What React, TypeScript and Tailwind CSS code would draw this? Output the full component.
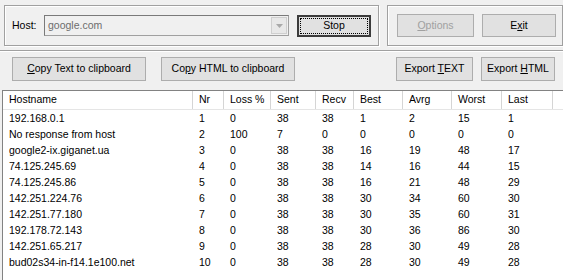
import React from 'react';

type Row = [string, string, string, string, string, string, string, string, string];

const rows: Row[] = [
  ['192.168.0.1', '1', '0', '38', '38', '1', '2', '15', '1'],
  ['No response from host', '2', '100', '7', '0', '0', '0', '0', '0'],
  ['google2-ix.giganet.ua', '3', '0', '38', '38', '16', '19', '48', '17'],
  ['74.125.245.69', '4', '0', '38', '38', '14', '16', '44', '15'],
  ['74.125.245.86', '5', '0', '38', '38', '16', '21', '48', '29'],
  ['142.251.224.76', '6', '0', '38', '38', '30', '34', '60', '30'],
  ['142.251.77.180', '7', '0', '38', '38', '30', '35', '60', '31'],
  ['192.178.72.143', '8', '0', '38', '38', '30', '36', '86', '30'],
  ['142.251.65.217', '9', '0', '38', '38', '28', '30', '49', '28'],
  ['bud02s34-in-f14.1e100.net', '10', '0', '38', '38', '28', '30', '49', '28'],
];

const headers = ['Hostname', 'Nr', 'Loss %', 'Sent', 'Recv', 'Best', 'Avrg', 'Worst', 'Last'];
const cols = 'grid grid-cols-[190px_31px_47px_45px_38px_49px_49px_50px_51px_1fr]';

function Btn({ children, className = '', disabled = false }: { children: React.ReactNode; className?: string; disabled?: boolean }) {
  return (
    <div
      className={`flex items-center justify-center bg-[#e1e1e1] border border-[#adadad] ${
        disabled ? 'text-[#a0a0a0]' : 'text-black'
      } ${className}`}
    >
      {children}
    </div>
  );
}

export default function App() {
  return (
    <div
      className="w-[563px] h-[280px] bg-[#f0f0f0] overflow-hidden flex flex-col text-[10.5px] text-black"
      style={{ fontFamily: '"Liberation Sans", Arial, sans-serif' }}
    >
      {/* top panels */}
      <div className="flex pt-[5px]">
        <div className="ml-[4px] w-[375px] h-[41px] border border-[#a0a0a0] shadow-[inset_1px_1px_0_#fff,1px_1px_0_#fff] flex items-center pl-[7px]">
          <span className="w-[32px]">Host:</span>
          <div className="w-[245px] h-[21px] border border-[#a0a0a0] border-t-[#7a7a7a] border-l-[#7a7a7a] bg-[#f0f0f0] flex items-center">
            <span className="pl-[3px] flex-1 text-[#6d6d6d]">google.com</span>
            <div className="w-[16px] h-[17px] mr-[1px] border border-[#cfcfcf] bg-[#e8e8e8] flex items-center justify-center">
              <svg width="7" height="4" viewBox="0 0 7 4">
                <path d="M0 0h7L3.5 4z" fill="#a9a9a9" />
              </svg>
            </div>
          </div>
          <div className="ml-[8px] w-[74px] h-[22px] border-2 border-[#3c3c3c] bg-[#e1e1e1] p-[1px]">
            <div className="w-full h-full border border-dotted border-black flex items-center justify-center">Stop</div>
          </div>
        </div>
        <div className="ml-[8px] w-[176px] h-[41px] border border-[#a0a0a0] shadow-[inset_1px_1px_0_#fff,1px_1px_0_#fff] flex items-center pl-[9px] gap-[8px]">
          <Btn disabled className="w-[77px] h-[23px]">
            <span>
              <span className="underline">O</span>ptions
            </span>
          </Btn>
          <Btn className="w-[74px] h-[23px]">
            <span>
              E<span className="underline">x</span>it
            </span>
          </Btn>
        </div>
      </div>

      {/* separator */}
      <div className="mt-[4px] h-[2px] border-t border-[#a0a0a0] bg-white" />

      {/* export buttons */}
      <div className="flex mt-[5px] h-[24px]">
        <Btn className="ml-[12px] w-[134px]">
          <span>
            <span className="underline">C</span>opy Text to clipboard
          </span>
        </Btn>
        <Btn className="ml-[15px] w-[134px]">
          <span>
            Co<span className="underline">p</span>y HTML to clipboard
          </span>
        </Btn>
        <Btn className="ml-[101px] w-[77px]">
          <span>
            Export <span className="underline">T</span>EXT
          </span>
        </Btn>
        <Btn className="ml-[8px] w-[74px]">
          <span>
            Export <span className="underline">H</span>TML
          </span>
        </Btn>
      </div>

      {/* results list */}
      <div className="mt-[9px] ml-[2px] flex-1 bg-white border-l border-t border-[#828282]">
        <div className={`${cols} h-[19px] border-b border-[#e5e5e5]`}>
          {headers.map((h) => (
            <div key={h} className="pl-[6px] flex items-center border-r border-[#d5d5d5]">
              {h}
            </div>
          ))}
          <div />
        </div>
        {rows.map((r) => (
          <div key={r[1]} className={`${cols} h-[16px] leading-[16px]`}>
            {r.map((c, i) => (
              <div key={i} className="pl-[6px] whitespace-nowrap">
                {c}
              </div>
            ))}
            <div />
          </div>
        ))}
      </div>
    </div>
  );
}
